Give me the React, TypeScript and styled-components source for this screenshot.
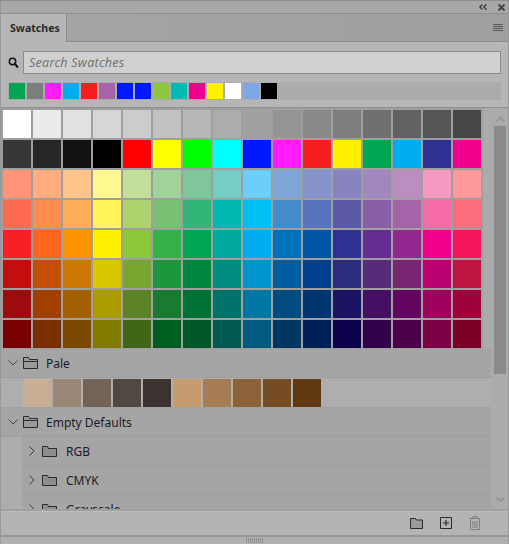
import React from "react";
import styled, { createGlobalStyle } from "styled-components";

const Global = createGlobalStyle`
  html, body { margin: 0; padding: 0; background: #a9a9a9; }
  * { box-sizing: border-box; }
`;

const FONT = `"Noto Sans", "Open Sans", "Liberation Sans", sans-serif`;

const MAIN: string[][] = [
  ["#ffffff","#ebebeb","#e1e1e1","#d7d7d7","#cccccc","#c2c2c2","#b7b7b7","#acacac","#a0a0a0","#959595","#898989","#7d7d7d","#707070","#626262","#555555","#464646"],
  ["#363636","#262626","#111111","#000000","#ff0000","#ffff00","#00ff00","#00ffff","#0018ff","#ff1aff","#f51f20","#fff200","#00a651","#00aeef","#2e3192","#f0008c"],
  ["#ff9479","#ffac80","#ffc588","#fff790","#c4df9b","#a0d29a","#7fc79a","#75cdc6","#6ad0fb","#7ea7d8","#8493ca","#8882be","#a187be","#bc8dbf","#f79ac2","#fd989b"],
  ["#fd6a4e","#ff8d52","#ffae58","#fff45c","#acd36e","#78c271","#33b579","#00b9b2","#00bff5","#438cca","#5574b9","#5c5aa8","#885fa8","#a763a8","#f56aa7","#fb6d7d"],
  ["#f72025","#fd651c","#ff9300","#fff200","#8dc73a","#33b24a","#00a651","#00a99d","#00aeef","#0072bc","#0054a6","#2e3192","#662d91","#92278f","#f0008c","#f5155b"],
  ["#c40d0d","#c24e00","#cc7706","#d8c800","#78a430","#1c963c","#00853e","#008c7f","#0094cc","#005e9e","#003f8c","#2d2c7c","#562c7a","#7a2573","#bb0070","#bc1540"],
  ["#9e0b0f","#a03f00","#a36000","#ab9b00","#5c8226","#197b30","#007236","#00736a","#0076a3","#004b80","#003471","#1b1464","#440e62","#630460","#9e005d","#9e0039"],
  ["#790000","#7b2e00","#7d4900","#827b00","#406618","#005e20","#005826","#005952","#005b7f","#003663","#002157","#0d004c","#32004b","#4b0049","#7b0046","#7a0026"],
];

const RECENT = ["#00a651","#7d7d7d","#ff1aff","#00aeef","#f51f20","#a763a8","#0018ff","#0018ff","#8dc73f","#00bbb4","#f0008c","#fff200","#ffffff","#7ea7e8","#000000"];
const PALE = ["#c8ae94","#998675","#736357","#534741","#3c3230","#c69c6e","#a67c52","#8c6239","#754c24","#603913"];

const Panel = styled.div`
  width: 509px; height: 544px; display: flex; flex-direction: column; overflow: hidden; position: relative;
  background: #a9a9a9; font-family: ${FONT}; border-top: 1px solid #8e8e8e;
  &::after {
    content: ""; position: absolute; inset: 0; pointer-events: none;
    border-left: 1px solid #989898; border-right: 1px solid #989898;
  }
`;
const TitleBar = styled.div`
  height: 13px; display: flex; align-items: center; justify-content: flex-end; gap: 11px;
  padding-right: 4px; background: #a8a8a8; border-bottom: 1px solid #8e8e8e; flex: none;
`;
const TabBar = styled.div`
  height: 28px; flex: none; display: flex; justify-content: space-between; align-items: stretch;
  background: linear-gradient(90deg, #a5a5a5, #9f9f9f); border-bottom: 1px solid #8c8c8c; padding-left: 1px;
`;
const Tab = styled.div`
  width: 66px; margin-bottom: -1px; background: #b6b6b6; border-right: 1px solid #8c8c8c; z-index: 1;
  padding: 5px 0 0 9px; font-size: 10.6px; font-weight: 700; color: #2a2a2a; line-height: 18px;
`;
const MenuButton = styled.div`
  width: 10px; margin: 10px 6px 0 0; height: 8px; flex: none;
  background: repeating-linear-gradient(#5a5a5a 0 1px, transparent 1px 2px);
`;
const Header = styled.div`
  flex: none; height: 66px; background: #b6b6b6; border-bottom: 1px solid #8f8f8f; padding: 9px 8px 0;
  display: flex; flex-direction: column; gap: 8px;
`;
const SearchRow = styled.div`
  display: flex; align-items: center; gap: 4px; height: 23px;
`;
const SearchBox = styled.div`
  flex: 1; height: 23px; background: #d0d0d0; border: 1px solid #8c8c8c; padding-left: 5px;
  font-size: 12.5px; font-style: italic; color: #757575; line-height: 21px; letter-spacing: 0.25px;
`;
const RecentBar = styled.div`
  height: 18px; display: flex; gap: 2px; background: #ababab; padding: 1px;
`;
const RecentChip = styled.div<{ $c: string }>`
  width: 16px; height: 16px; background: ${p => p.$c};
`;
const Body = styled.div`
  flex: 1; min-height: 0; display: flex;
`;
const List = styled.div`
  width: 491px; overflow: hidden; display: flex; flex-direction: column; background: #a5a5a5;
`;
const GridWrap = styled.div`
  flex: none; background: #ababab; display: flex;
`;
const Grid = styled.div`
  display: grid; grid-template-columns: repeat(16, 28px); grid-auto-rows: 28px; gap: 2px;
  padding: 2px 0 1px 3px; width: 483px; background: #9f9f9f;
`;
const Cell = styled.div<{ $c: string }>`
  background: ${p => p.$c};
`;
const GroupRow = styled.div<{ $sub?: boolean }>`
  flex: none; height: 29px; display: flex; align-items: center; background: #a5a5a5;
  border-bottom: 1px solid #9d9d9d; font-size: 12px; color: #1c1a26;
  padding-left: ${p => (p.$sub ? "7px" : "8px")};
  margin-left: ${p => (p.$sub ? "22px" : "0")};
  gap: ${p => (p.$sub ? "7px" : "5px")};
`;
const GroupLabel = styled.span<{ $sub?: boolean }>`
  margin-left: ${p => (p.$sub ? "2px" : "3px")}; line-height: 16px; padding-top: 2px;
`;
const PaleRow = styled.div`
  flex: none; height: 30px; display: flex; gap: 2px; padding: 1px 0 1px 23px; background: #aeaeae;
  border-bottom: 1px solid #a2a2a2;
`;
const PaleCell = styled.div<{ $c: string }>`
  width: 28px; height: 28px; background: ${p => p.$c};
`;
const SubBlock = styled.div`
  flex: 1; background: #adadad;
`;
const Scrollbar = styled.div`
  width: 18px; flex: none; background: #ababab; display: flex; flex-direction: column; align-items: center;
  padding-top: 9px;
`;
const Thumb = styled.div`
  width: 12px; height: 248px; background: #8a8a8a; margin-top: 4px; flex: none;
`;
const Spacer = styled.div`
  flex: 1;
`;
const Footer = styled.div`
  flex: none; height: 26px; background: #b4b4b4; border-top: 2px solid #a0a0a0; box-shadow: inset 0 1px 0 #bcbcbc;
  display: flex; align-items: center; justify-content: flex-end; padding: 0 28px 0 0; gap: 17px;
`;
const Grip = styled.div`
  flex: none; height: 9px; background: #b0b0b0; border-top: 2px solid #959595; display: flex; justify-content: center;
`;
const GripMark = styled.div`
  width: 18px; height: 5px; margin-top: 1px; background: repeating-linear-gradient(90deg, #8e8e8e 0 1px, transparent 1px 2px);
`;

const Chevron = ({ open }: { open?: boolean }) =>
  open ? (
    <svg width="10" height="6" viewBox="0 0 10 6" fill="none" stroke="#4a4a4a" strokeWidth="1"><path d="M.5.5 5 5 9.5.5" /></svg>
  ) : (
    <svg width="6" height="10" viewBox="0 0 6 10" fill="none" stroke="#3a3a3a" strokeWidth="1"><path d="M.5.5 5 5 .5 9.5" /></svg>
  );

const FolderOpen = () => (
  <svg width="15" height="12" viewBox="0 0 15 12" fill="#9a9a9a" stroke="#2b2b2b" strokeWidth="1">
    <path d="M.5 11.5V.5h5l1 2h8v9z" />
    <path d="M.5 4.5h14" />
  </svg>
);
const Folder = () => (
  <svg width="15" height="11" viewBox="0 0 15 11" fill="#8e8e8e" stroke="#2b2b2b" strokeWidth="1">
    <path d="M.5 10.5V.5h5l1 2h8v8z" />
  </svg>
);
const SearchIcon = () => (
  <svg width="11" height="12" viewBox="0 0 11 12" fill="none" stroke="#111" style={{ flex: "none" }}>
    <circle cx="4.5" cy="4.5" r="3.2" strokeWidth="1.5" />
    <path d="M7 7l3 3.6" strokeWidth="2" />
  </svg>
);

const Group = ({ label, open, sub }: { label: string; open?: boolean; sub?: boolean }) => (
  <GroupRow $sub={sub}>
    <Chevron open={open} />
    {sub ? <Folder /> : <FolderOpen />}
    <GroupLabel $sub={sub}>{label}</GroupLabel>
  </GroupRow>
);

export default function App() {
  return (
    <>
      <Global />
      <Panel>
        <TitleBar>
          <svg width="8" height="6" viewBox="0 0 8 6" fill="none" stroke="#333" strokeWidth="1.2"><path d="M3.5.3.8 3l2.7 2.7M7.5.3 4.8 3l2.7 2.7" /></svg>
          <svg width="7" height="7" viewBox="0 0 7 7" fill="none" stroke="#444" strokeWidth="2"><path d="M.5.5l6 6M6.5.5l-6 6" /></svg>
        </TitleBar>
        <TabBar>
          <Tab>Swatches</Tab>
          <MenuButton />
        </TabBar>
        <Header>
          <SearchRow>
            <SearchIcon />
            <SearchBox>Search Swatches</SearchBox>
          </SearchRow>
          <RecentBar>
            {RECENT.map((c, i) => <RecentChip key={i} $c={c} />)}
          </RecentBar>
        </Header>
        <Body>
          <List>
            <GridWrap>
              <Grid>
                {MAIN.flat().map((c, i) => <Cell key={i} $c={c} />)}
              </Grid>
            </GridWrap>
            <Group label="Pale" open />
            <PaleRow>
              {PALE.map((c, i) => <PaleCell key={i} $c={c} />)}
            </PaleRow>
            <Group label="Empty Defaults" open />
            <SubBlock>
              <Group label="RGB" sub />
              <Group label="CMYK" sub />
              <Group label="Grayscale" sub />
            </SubBlock>
          </List>
          <Scrollbar>
            <svg width="9" height="5" viewBox="0 0 9 5" fill="none" stroke="#8e8e8e" strokeWidth="1.2"><path d="M.5 4.5l4-4 4 4" /></svg>
            <Thumb />
            <Spacer />
            <svg width="9" height="5" viewBox="0 0 9 5" fill="none" stroke="#8e8e8e" strokeWidth="1.2" style={{ marginBottom: 7 }}><path d="M.5.5l4 4 4-4" /></svg>
          </Scrollbar>
        </Body>
        <Footer>
          <svg width="13" height="11" viewBox="0 0 13 11" fill="#9a9a9a" stroke="#2b2b2b"><path d="M.5 10.5V.5h5l1 1.5h6v8.5z" /></svg>
          <svg width="12" height="12" viewBox="0 0 12 12" fill="none" stroke="#2b2b2b"><path d="M.5.5h11v11H.5z" /><path d="M3 6h6M6 3v6" strokeWidth="1.2" /></svg>
          <svg width="12" height="14" viewBox="0 0 12 14" fill="none" stroke="#7f7f7f"><path d="M.5 2.5h11M4 2.5v-2h4v2M1.5 2.5v11h9v-11M4 5v7M6 5v7M8 5v7" /></svg>
        </Footer>
        <Grip><GripMark /></Grip>
      </Panel>
    </>
  );
}
